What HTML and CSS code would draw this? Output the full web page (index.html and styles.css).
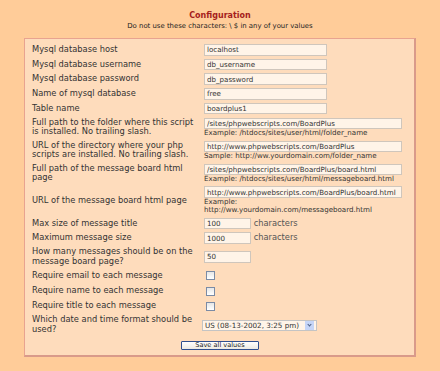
FILE: index.html
```html
<!DOCTYPE html>
<html lang="en">
<head>
    <meta charset="UTF-8">
    <title>Configuration</title>
    <link rel="stylesheet" href="styles.css">
</head>
<body>
    <div class="header">
        <h1>Configuration</h1>
        <p class="warning">Do not use these characters: \ $ in any of your values</p>
    </div>

    <form class="panel">
        <table class="config">
            <tr>
                <td class="label">Mysql database host</td>
                <td><input type="text" class="field" value="localhost"></td>
            </tr>
            <tr>
                <td class="label">Mysql database username</td>
                <td><input type="text" class="field" value="db_username"></td>
            </tr>
            <tr>
                <td class="label">Mysql database password</td>
                <td><input type="text" class="field" value="db_password"></td>
            </tr>
            <tr>
                <td class="label">Name of mysql database</td>
                <td><input type="text" class="field" value="free"></td>
            </tr>
            <tr>
                <td class="label">Table name</td>
                <td><input type="text" class="field" value="boardplus1"></td>
            </tr>
            <tr>
                <td class="label">Full path to the folder where this script is installed. No trailing slash.</td>
                <td>
                    <input type="text" class="field wide" value="/sites/phpwebscripts.com/BoardPlus">
                    <div class="hint">Example: /htdocs/sites/user/html/folder_name</div>
                </td>
            </tr>
            <tr>
                <td class="label">URL of the directory where your php scripts are installed. No trailing slash.</td>
                <td>
                    <input type="text" class="field wide" value="http://www.phpwebscripts.com/BoardPlus">
                    <div class="hint">Sample: http://ww.yourdomain.com/folder_name</div>
                </td>
            </tr>
            <tr>
                <td class="label">Full path of the message board html page</td>
                <td>
                    <input type="text" class="field wide" value="/sites/phpwebscripts.com/BoardPlus/board.html">
                    <div class="hint">Example: /htdocs/sites/user/html/messageboard.html</div>
                </td>
            </tr>
            <tr>
                <td class="label">URL of the message board html page</td>
                <td>
                    <input type="text" class="field wide" value="http://www.phpwebscripts.com/BoardPlus/board.html">
                    <div class="hint">Example:<br>http://ww.yourdomain.com/messageboard.html</div>
                </td>
            </tr>
            <tr>
                <td class="label">Max size of message title</td>
                <td><input type="text" class="field small" value="100"> <span class="unit">characters</span></td>
            </tr>
            <tr>
                <td class="label">Maximum message size</td>
                <td><input type="text" class="field small" value="1000"> <span class="unit">characters</span></td>
            </tr>
            <tr>
                <td class="label">How many messages should be on the message board page?</td>
                <td><input type="text" class="field small" value="50"></td>
            </tr>
            <tr>
                <td class="label">Require email to each message</td>
                <td><input type="checkbox" class="check"></td>
            </tr>
            <tr>
                <td class="label">Require name to each message</td>
                <td><input type="checkbox" class="check"></td>
            </tr>
            <tr>
                <td class="label">Require title to each message</td>
                <td><input type="checkbox" class="check"></td>
            </tr>
            <tr>
                <td class="label">Which date and time format should be used?</td>
                <td>
                    <span class="select-wrap">
                        <select class="select">
                            <option>US (08-13-2002, 3:25 pm)</option>
                            <option>EU (13-08-2002, 15:25)</option>
                        </select>
                    </span>
                </td>
            </tr>
            <tr>
                <td colspan="2" class="actions"><button type="button" class="save">Save all values</button></td>
            </tr>
        </table>
    </form>
</body>
</html>
```

FILE: styles.css
```css
body {
    margin: 0;
    background-color: #ffcc99;
    font-family: "DejaVu Sans", Verdana, sans-serif;
    color: #333;
}

.header {
    text-align: center;
    padding-top: 11px;
}

h1 {
    margin: 0;
    font-size: 8px;
    line-height: 9px;
    color: #a51c1c;
}

.warning {
    margin: 2px 0 0;
    font-size: 6.9px;
    line-height: 8px;
    color: #222;
}

.panel {
    box-sizing: border-box;
    width: 392px;
    margin: 8px auto 0;
    padding: 3.5px 6px 3px 7px;
    background-color: #fedcbc;
    border: 1px solid #e8a390;
    border-right: 2px solid #d99a8a;
    border-bottom: 2px solid #d99a8a;
}

.config {
    width: 100%;
    border-collapse: collapse;
}

.config td {
    padding: 1.6px 0;
    font-size: 8.3px;
    line-height: 9.8px;
    vertical-align: middle;
}

.config td.label {
    width: 168px;
    color: #333;
    padding-right: 4px;
}

.field {
    box-sizing: border-box;
    display: block;
    width: 123px;
    height: 11.5px;
    margin: 0;
    padding: 0 2px;
    font-family: "DejaVu Sans", Verdana, sans-serif;
    font-size: 7.1px;
    color: #333;
    background-color: #fff4e8;
    border: 1px solid #cfc6bc;
    border-radius: 0;
}

.field.wide {
    width: 198px;
}

.field.small {
    display: inline-block;
    vertical-align: middle;
    width: 47px;
}

.hint {
    font-size: 7.1px;
    line-height: 8.3px;
    color: #333;
}

.unit {
    color: #555;
    vertical-align: middle;
}

.check {
    appearance: none;
    -webkit-appearance: none;
    box-sizing: border-box;
    display: block;
    width: 9px;
    height: 9px;
    margin: 1.5px 0 1.5px 2px;
    background: linear-gradient(#e6e6e6, #ffffff);
    border: 1px solid #7b8ba5;
}

.select-wrap {
    position: relative;
    display: inline-block;
    vertical-align: middle;
}

.select {
    appearance: none;
    -webkit-appearance: none;
    box-sizing: border-box;
    display: block;
    width: 115px;
    height: 11px;
    margin: 0 0 0 -2px;
    padding: 0 12px 0 2px;
    font-family: "DejaVu Sans", Verdana, sans-serif;
    font-size: 7.2px;
    color: #333;
    background-color: #fff4e8;
    border: 1px solid #c4c4c4;
    border-radius: 0;
}

.select-wrap::after {
    content: "";
    position: absolute;
    top: 1px;
    right: 3px;
    width: 9px;
    height: 9px;
    background: #c5d5f7;
    pointer-events: none;
}

.select-wrap::before {
    content: "";
    position: absolute;
    z-index: 1;
    top: 3px;
    right: 6px;
    width: 2px;
    height: 2px;
    border-right: 1px solid #4d6185;
    border-bottom: 1px solid #4d6185;
    transform: rotate(45deg);
    pointer-events: none;
}

.config td.actions {
    text-align: center;
    padding-top: 3.5px;
}

.save {
    box-sizing: border-box;
    display: inline-block;
    width: 78px;
    height: 9px;
    padding: 0;
    font-family: "DejaVu Sans", Verdana, sans-serif;
    font-size: 6.6px;
    line-height: 7px;
    color: #222;
    background: linear-gradient(#ffffff, #ece9e2);
    border: 1px solid #2f4f8f;
    border-radius: 1px;
    cursor: pointer;
}
```
